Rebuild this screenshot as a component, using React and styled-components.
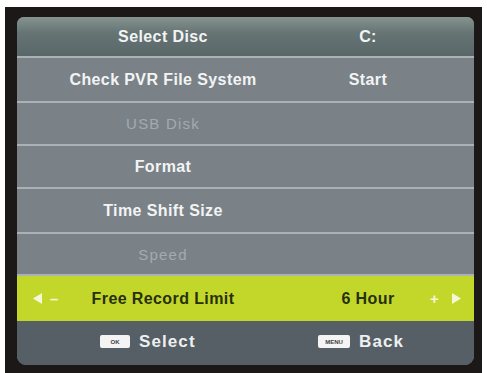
import React from 'react'
import styled, { createGlobalStyle } from 'styled-components';

const Global = createGlobalStyle`
    html, body {
        margin: 0;
        padding: 0;
        background: #ffffff;
        width: 487px;
        height: 373px;
        overflow: hidden;
    }
`

const Frame = styled.div`
    margin: 7px 5px 0 5px;
    height: 366px;
    background: #1b1817;
    padding: 10px 8px 0 12px;
    box-sizing: border-box;
    font-family: "Liberation Sans", Arial, sans-serif;
`

const Panel = styled.div`
    width: 457px;
    height: 348px;
    border-radius: 7px 7px 9px 9px;
    overflow: hidden;
    background: #7a8187;
    display: flex;
    flex-direction: column;
`

const Row = styled.div`
    height: ${p => p.h}px;
    flex: none;
    display: grid;
    grid-template-columns: 50px 192px 47px 124px 44px;
    align-items: center;
    box-sizing: border-box;
    border-bottom: ${p => p.last ? 'none' : '2px solid #aab2b6'};
    background: ${p => p.active ? '#c3d72b' : p.head ? 'linear-gradient(#85948f 0%, #667474 40%, #5a6769 100%)' : '#7a8288'};
`

const Label = styled.div`
    grid-column: 2;
    text-align: center;
    white-space: nowrap;
    font-size: ${p => p.dim ? '15px' : '16px'};
    font-weight: ${p => p.dim ? 'normal' : 'bold'};
    letter-spacing: ${p => p.dim ? '1.2px' : '0.4px'};
    color: ${p => p.active ? '#27300c' : p.dim ? '#a3abb0' : '#f2f4f4'};
`

const Value = styled(Label)`
    grid-column: 4;
`

const Arrow = styled.div`
    grid-column: ${p => p.side === 'left' ? 1 : 5};
    display: flex;
    align-items: center;
    padding-left: ${p => p.side === 'left' ? '16px' : '0'};
    gap: ${p => p.side === 'left' ? '8px' : '13px'};
    color: #f4f7d8;
    font-weight: bold;
    font-size: 15px;
`

const Footer = styled.div`
    flex: 1;
    background: #565f66;
    display: flex;
    align-items: center;
    padding-left: 83px;
    padding-bottom: 3px;
`

const Hint = styled.div`
    display: flex;
    align-items: center;
    gap: 9px;
    width: ${p => p.w}px;
    color: #eef0f0;
    font-weight: bold;
    font-size: 17px;
    letter-spacing: 1.1px;
`

const Key = styled.span`
    display: inline-flex;
    align-items: center;
    justify-content: center;
    width: ${p => p.w}px;
    height: 13px;
    background: #f4f4f4;
    border-radius: 2px;
    color: #3b3f42;
    font-size: 6px;
    letter-spacing: 0;
    font-weight: bold;
`

const Tri = ({ dir }) => (
    <svg width="9" height="11" viewBox="0 0 9 11">
        <path d={dir === 'left' ? 'M9 0 L0 5.5 L9 11 Z' : 'M0 0 L9 5.5 L0 11 Z'} fill="#f4f7d8" />
    </svg>
)

const rows = [
    { label: 'Select Disc', value: 'C:', head: true, h: 41 },
    { label: 'Check PVR File System', value: 'Start', h: 45 },
    { label: 'USB Disk', dim: true, h: 43 },
    { label: 'Format', h: 43 },
    { label: 'Time Shift Size', h: 45 },
    { label: 'Speed', dim: true, h: 42 },
    { label: 'Free Record Limit', value: '6 Hour', active: true, h: 45, last: true },
]

const App = () => {
    return (
        <>
            <Global />
            <Frame>
                <Panel>
                    {rows.map((r, i) => (
                        <Row key={i} h={r.h} head={r.head} active={r.active} last={r.last}>
                            {r.active && <Arrow side="left"><Tri dir="left" /><span>–</span></Arrow>}
                            <Label dim={r.dim} active={r.active}>{r.label}</Label>
                            {r.value && <Value active={r.active}>{r.value}</Value>}
                            {r.active && <Arrow side="right"><span>+</span><Tri dir="right" /></Arrow>}
                        </Row>
                    ))}
                    <Footer>
                        <Hint w={218}><Key w={30}>OK</Key>Select</Hint>
                        <Hint><Key w={32}>MENU</Key>Back</Hint>
                    </Footer>
                </Panel>
            </Frame>
        </>
    )
}

export default App
